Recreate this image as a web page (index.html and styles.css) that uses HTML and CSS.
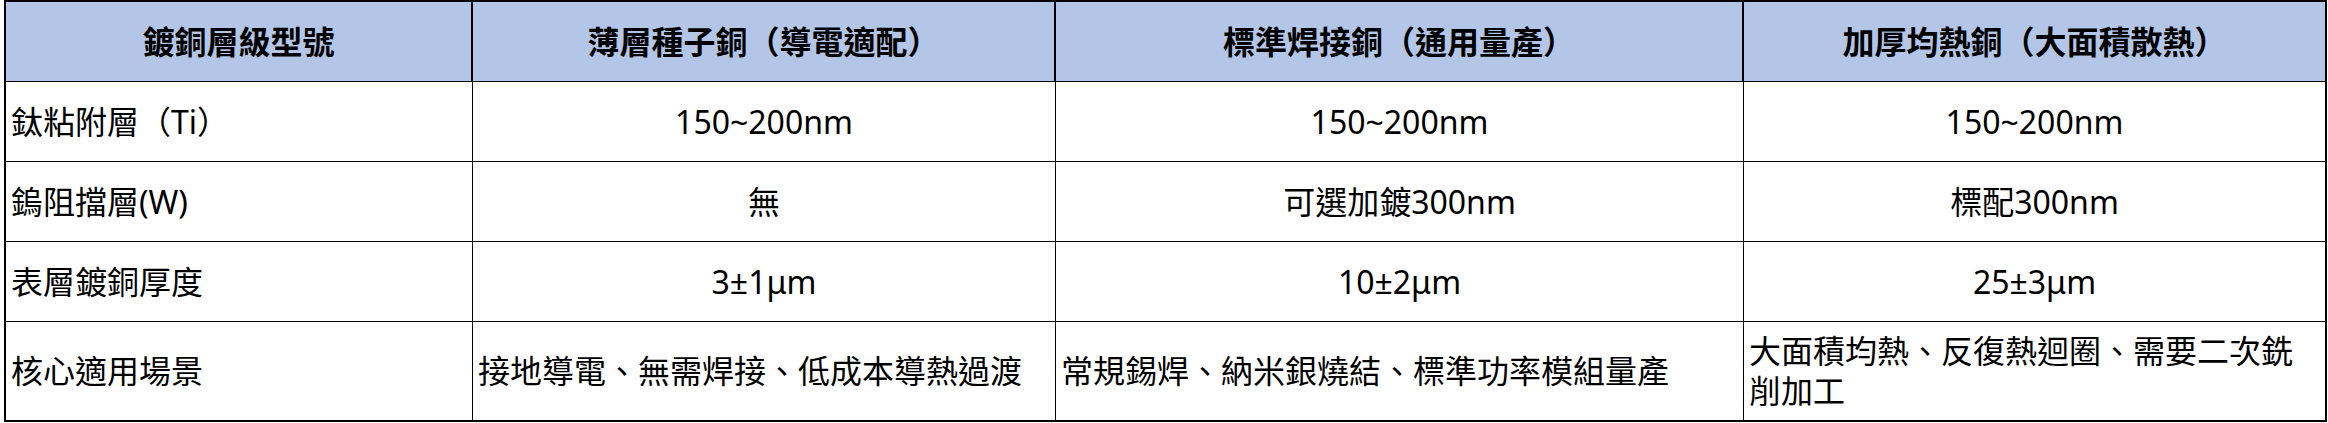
FILE: index.html
```html
<!DOCTYPE html>
<html lang="zh-Hant">
<head>
<meta charset="utf-8">
<title>鍍銅層級型號</title>
<link rel="stylesheet" href="styles.css">
</head>
<body>
<table class="spec">
  <colgroup>
    <col class="c1"><col class="c2"><col class="c3"><col class="c4">
  </colgroup>
  <thead>
    <tr class="head">
      <th>鍍銅層級型號</th>
      <th>薄層種子銅（導電適配）</th>
      <th>標準焊接銅（通用量產）</th>
      <th class="last">加厚均熱銅（大面積散熱）</th>
    </tr>
  </thead>
  <tbody>
    <tr class="row">
      <td class="label">鈦粘附層（Ti）</td>
      <td>150~200nm</td>
      <td>150~200nm</td>
      <td class="last">150~200nm</td>
    </tr>
    <tr class="row">
      <td class="label">鎢阻擋層(W)</td>
      <td>無</td>
      <td>可選加鍍300nm</td>
      <td class="last">標配300nm</td>
    </tr>
    <tr class="row">
      <td class="label">表層鍍銅厚度</td>
      <td>3±1μm</td>
      <td>10±2μm</td>
      <td class="last">25±3μm</td>
    </tr>
    <tr class="row tall">
      <td class="label">核心適用場景</td>
      <td class="label">接地導電、無需焊接、低成本導熱過渡</td>
      <td class="label">常規錫焊、納米銀燒結、標準功率模組量產</td>
      <td class="label last">大面積均熱、反復熱迴圈、需要二次銑削加工</td>
    </tr>
  </tbody>
</table>
</body>
</html>
```

FILE: styles.css
```css
html, body {
  margin: 0;
  padding: 0;
  background: #ffffff;
}

.spec {
  margin: 0 0 0 4px;
  border-collapse: separate;
  border-spacing: 0;
  table-layout: fixed;
  width: 2323px;
  border-top: 2px solid #000;
  border-left: 2px solid #000;
  font-family: "Noto Sans", "Noto Sans CJK TC", sans-serif;
  font-size: 32px;
  line-height: 40px;
  color: #000;
}

.c1 { width: 467px; }
.c2 { width: 583px; }
.c3 { width: 688px; }
.c4 { width: 583px; }

.spec th,
.spec td {
  padding: 0 4px;
  border-right: 1px solid #000;
  border-bottom: 1px solid #000;
  text-align: center;
  vertical-align: middle;
  overflow: hidden;
}

.spec th {
  background: #b4c6e7;
  font-weight: 700;
  border-right-width: 2px;
}

.spec .last {
  border-right-width: 2px;
}

.head { height: 80px; }
.row { height: 80px; }
.tall { height: 100px; }

.spec td.label {
  text-align: left;
  padding-left: 5px;
}

.tall td {
  border-bottom-width: 2px;
}
```
